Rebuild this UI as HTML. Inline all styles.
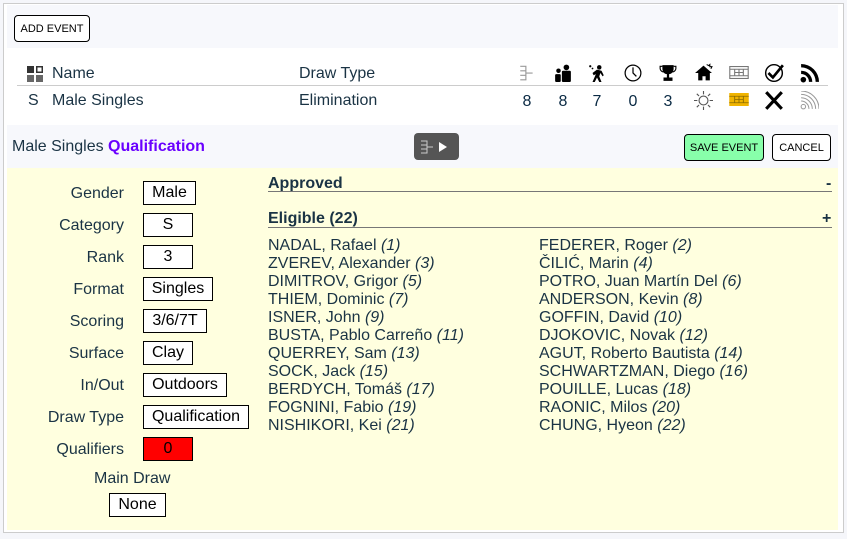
<!DOCTYPE html>
<html><head><meta charset="utf-8"><style>
*{box-sizing:border-box;margin:0;padding:0}
body{width:847px;height:539px;background:#f5f6fa;font-family:"Liberation Sans",Arial,sans-serif;color:#1a3344;position:relative;overflow:hidden}
.a{position:absolute;white-space:nowrap}
.btn{position:absolute;border:1px solid #000;border-radius:4px;background:#fff;font-size:11px;color:#000;text-align:center;display:flex;align-items:center;justify-content:center}
.lab{position:absolute;right:723px;font-size:16px;text-align:right}
.box{position:absolute;left:143px;height:24px;border:1px solid #000;background:#fff;color:#000;font-size:16px;display:flex;align-items:center;justify-content:center}
.n{font-size:16px;line-height:18px}
.n i{font-style:italic}
.num{position:absolute;top:93px;font-size:16px;color:#0a2a44;width:20px;text-align:center}
</style></head><body>
<div class="a" style="left:3px;top:3px;width:841px;height:530px;border:1px solid #ccc;background:#fff"></div>
<div class="a" style="left:7px;top:5px;width:831px;height:43px;background:#f7f8fc"></div>
<div class="btn" style="left:14px;top:15px;width:76px;height:27px">ADD EVENT</div>

<svg class="a" style="left:27px;top:66px" width="16" height="16" viewBox="0 0 16 16"><rect x="0" y="0" width="7" height="7" fill="#333"/><rect x="9" y="0" width="7" height="7" fill="#333"/><rect x="10.5" y="1.5" width="4" height="4" fill="#fff"/><rect x="0" y="9" width="7" height="7" fill="#666"/><rect x="9" y="9" width="7" height="7" fill="#666"/></svg>
<div class="a" style="left:52px;top:65px;font-size:16px">Name</div>
<div class="a" style="left:299px;top:65px;font-size:16px">Draw Type</div>
<div class="a" style="left:17px;top:85px;width:811px;height:1px;background:#ccc"></div>
<div class="a" style="left:28px;top:92px;font-size:16px">S</div>
<div class="a" style="left:52px;top:92px;font-size:16px">Male Singles</div>
<div class="a" style="left:299px;top:92px;font-size:16px">Elimination</div>

<svg class="a" style="left:518px;top:64px" width="18" height="18" viewBox="0 0 16 16" fill="none" stroke="#999" stroke-width="1"><path d="M2 2h5v4H2M2 10h5v4H2M7 4v8M7 8h6"/></svg>
<svg class="a" style="left:554px;top:64px" width="18" height="18" viewBox="0 0 16 16" fill="#000"><circle cx="11" cy="3" r="2.5"/><rect x="7" y="6" width="8" height="10" rx="1"/><circle cx="4" cy="6" r="2"/><rect x="1" y="9" width="5" height="7" rx="1"/></svg>
<svg class="a" style="left:588px;top:64px" width="18" height="18" viewBox="0 0 16 16" fill="#000"><circle cx="10" cy="3" r="2"/><path d="M8 5l4 1 2 4-1 1-2-3-1 3 2 5h-2l-2-4-2 4H4l3-7-2 1-1-2z"/><circle cx="2" cy="2" r="1"/><circle cx="4" cy="4" r=".8"/></svg>
<svg class="a" style="left:624px;top:64px" width="18" height="18" viewBox="0 0 16 16" fill="none" stroke="#000" stroke-width="1.1"><circle cx="8" cy="8" r="7"/><path d="M8 3v5l3 3"/></svg>
<svg class="a" style="left:659px;top:64px" width="18" height="18" viewBox="0 0 16 16" fill="#000"><path d="M3 1h10v3c0 3-2 5-4 5v3h3v3H4v-3h3V9C5 9 3 7 3 4z"/><path d="M3 2H1v2c0 2 2 3 3 3M13 2h2v2c0 2-2 3-3 3" fill="none" stroke="#000"/></svg>
<svg class="a" style="left:694px;top:63px" width="19" height="19" viewBox="0 0 18 17" fill="#000"><path d="M1 9l8-7 8 7h-2v7h-4v-4H8v4H4V9z"/><path d="M12 1l2 1 1-1 0 2 2 0-1 2" stroke="#000" fill="none"/></svg>
<svg class="a" style="left:729px;top:66px" width="20" height="13" viewBox="0 0 18 12" fill="none" stroke="#777" stroke-width="1"><rect x=".5" y=".5" width="17" height="11"/><path d="M.5 3h17M.5 9h17M5 3v6M13 3v6M9 3v6M5 6h8"/></svg>
<svg class="a" style="left:764px;top:63px" width="20" height="20" viewBox="0 0 18 18" fill="none" stroke="#000" stroke-width="1.6"><circle cx="9" cy="9" r="7.5" stroke-width="1.3"/><path d="M4 9l4 4 9-11" stroke-width="2.4"/></svg>
<svg class="a" style="left:800px;top:64px" width="19" height="19" viewBox="0 0 17 17" fill="#000"><circle cx="3" cy="14" r="2.5"/><path d="M1 6a10 10 0 0 1 10 10H8a7 7 0 0 0-7-7z"/><path d="M1 0a16 16 0 0 1 16 16h-3A13 13 0 0 0 1 3z"/></svg>

<div class="num" style="left:517px">8</div>
<div class="num" style="left:553px">8</div>
<div class="num" style="left:587px">7</div>
<div class="num" style="left:623px">0</div>
<div class="num" style="left:658px">3</div>
<svg class="a" style="left:694px;top:91px" width="19" height="19" viewBox="0 0 17 17" fill="none" stroke="#555" stroke-width="1"><circle cx="8.5" cy="8.5" r="4"/><path d="M8.5 0v3M8.5 14v3M0 8.5h3M14 8.5h3M2.5 2.5l2 2M12.5 12.5l2 2M2.5 14.5l2-2M12.5 4.5l2-2"/></svg>
<svg class="a" style="left:729px;top:93px" width="20" height="13" viewBox="0 0 18 12"><rect x="0" y="0" width="18" height="12" fill="#f0b400"/><path d="M0 3h18M0 9h18M5 3v6M13 3v6M9 3v6M5 6h8" stroke="#8a6a00" stroke-width=".8" fill="none"/></svg>
<svg class="a" style="left:764px;top:91px" width="20" height="19" viewBox="0 0 18 17" stroke="#000" stroke-width="2.8"><path d="M2 1l14 15M16 1L2 16"/></svg>
<svg class="a" style="left:800px;top:91px" width="19" height="19" viewBox="0 0 17 17" fill="none" stroke="#999" stroke-width=".9"><circle cx="3" cy="14" r="2"/><path d="M1 9a7 7 0 0 1 7 7M1 6a10 10 0 0 1 10 10M1 3a13 13 0 0 1 13 13M1 0a16 16 0 0 1 16 16"/></svg>

<div class="a" style="left:7px;top:125px;width:831px;height:43px;background:#f7f8fc"></div>
<div class="a" style="left:12px;top:138px;font-size:16px">Male Singles <b style="color:#6a00ff">Qualification</b></div>
<div class="a" style="left:414px;top:133px;width:45px;height:27px;background:#555;border-radius:4px"></div>
<svg class="a" style="left:420px;top:139px" width="34" height="16" viewBox="0 0 34 16" fill="none" stroke="#ccc" stroke-width="1"><path d="M1 2h6v4H1M1 10h6v4H1M7 4v8M7 8h6"/><path d="M19 3l8 5-8 5z" fill="#fff" stroke="none"/></svg>
<div class="btn" style="left:684px;top:134px;width:80px;height:27px;background:#88ffaa">SAVE EVENT</div>
<div class="btn" style="left:772px;top:134px;width:59px;height:27px">CANCEL</div>

<div class="a" style="left:7px;top:168px;width:831px;height:362px;background:#ffffdf"></div>
<div class="lab" style="top:185px">Gender</div><div class="box" style="top:181px;width:53px">Male</div>
<div class="lab" style="top:217px">Category</div><div class="box" style="top:213px;width:50px">S</div>
<div class="lab" style="top:249px">Rank</div><div class="box" style="top:245px;width:50px">3</div>
<div class="lab" style="top:281px">Format</div><div class="box" style="top:277px;width:70px">Singles</div>
<div class="lab" style="top:313px">Scoring</div><div class="box" style="top:309px;width:64px">3/6/7T</div>
<div class="lab" style="top:345px">Surface</div><div class="box" style="top:341px;width:50px">Clay</div>
<div class="lab" style="top:377px">In/Out</div><div class="box" style="top:373px;width:84px">Outdoors</div>
<div class="lab" style="top:409px">Draw Type</div><div class="box" style="top:405px;width:106px">Qualification</div>
<div class="lab" style="top:441px">Qualifiers</div><div class="box" style="top:437px;width:50px;background:#ff0000">0</div>
<div class="a" style="left:94px;top:470px;font-size:16px">Main Draw</div>
<div class="box" style="left:109px;top:493px;width:57px">None</div>

<div class="a" style="left:268px;top:175px;font-size:16px;font-weight:bold">Approved</div>
<div class="a" style="left:826px;top:175px;font-size:16px;font-weight:bold">-</div>
<div class="a" style="left:268px;top:191px;width:564px;height:1px;background:#777"></div>
<div class="a" style="left:268px;top:210px;font-size:16px;font-weight:bold">Eligible (22)</div>
<div class="a" style="left:822px;top:210px;font-size:16px;font-weight:bold">+</div>
<div class="a" style="left:268px;top:227px;width:564px;height:1px;background:#777"></div>

<div class="a n" style="left:268px;top:237px">NADAL, Rafael <i>(1)</i><br>ZVEREV, Alexander <i>(3)</i><br>DIMITROV, Grigor <i>(5)</i><br>THIEM, Dominic <i>(7)</i><br>ISNER, John <i>(9)</i><br>BUSTA, Pablo Carreño <i>(11)</i><br>QUERREY, Sam <i>(13)</i><br>SOCK, Jack <i>(15)</i><br>BERDYCH, Tomáš <i>(17)</i><br>FOGNINI, Fabio <i>(19)</i><br>NISHIKORI, Kei <i>(21)</i></div>
<div class="a n" style="left:539px;top:237px">FEDERER, Roger <i>(2)</i><br>ČILIĆ, Marin <i>(4)</i><br>POTRO, Juan Martín Del <i>(6)</i><br>ANDERSON, Kevin <i>(8)</i><br>GOFFIN, David <i>(10)</i><br>DJOKOVIC, Novak <i>(12)</i><br>AGUT, Roberto Bautista <i>(14)</i><br>SCHWARTZMAN, Diego <i>(16)</i><br>POUILLE, Lucas <i>(18)</i><br>RAONIC, Milos <i>(20)</i><br>CHUNG, Hyeon <i>(22)</i></div>
</body></html>
